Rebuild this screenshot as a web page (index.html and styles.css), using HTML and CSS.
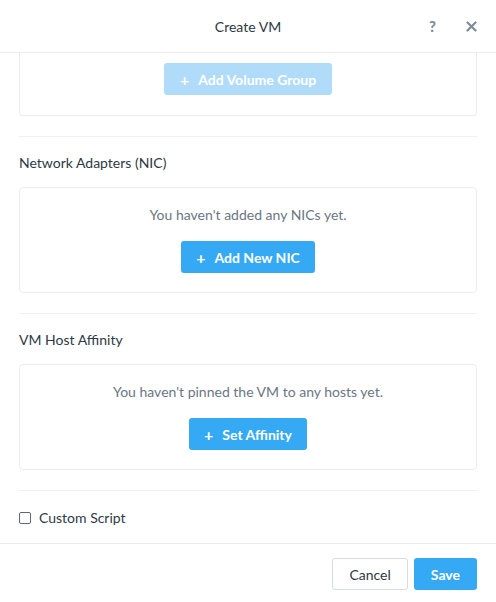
FILE: index.html
```html
<!DOCTYPE html>
<html>
<head>
<meta charset="utf-8">
<link rel="stylesheet" href="styles.css">
</head>
<body>
<div class="modal">
  <header class="head">
    <div class="title">Create VM</div>
    <div class="head-actions">
      <span class="help">?</span>
      <span class="close">
        <svg width="11" height="11" viewBox="0 0 11 11"><path d="M1.5 1.5L9.5 9.5M9.5 1.5L1.5 9.5" stroke="#7f8b99" stroke-width="2.2" stroke-linecap="round"/></svg>
      </span>
    </div>
  </header>
  <main class="body">
    <div class="card card-cut">
      <button class="btn btn-primary btn-disabled"><span class="plus">+</span>Add Volume Group</button>
    </div>
    <hr class="divider">
    <div class="section-title">Network Adapters (NIC)</div>
    <div class="card">
      <div class="empty">You haven't added any NICs yet.</div>
      <button class="btn btn-primary"><span class="plus">+</span>Add New NIC</button>
    </div>
    <hr class="divider">
    <div class="section-title">VM Host Affinity</div>
    <div class="card">
      <div class="empty">You haven't pinned the VM to any hosts yet.</div>
      <button class="btn btn-primary"><span class="plus">+</span>Set Affinity</button>
    </div>
    <hr class="divider">
    <label class="check-row"><span class="checkbox"></span>Custom Script</label>
  </main>
  <footer class="foot">
    <button class="btn btn-default">Cancel</button>
    <button class="btn btn-primary">Save</button>
  </footer>
</div>
</body>
</html>
```
FILE: styles.css
```css
* { box-sizing: border-box; }
html, body { margin: 0; padding: 0; background: #fff; }
body {
  font-family: "Lato", "Liberation Sans", sans-serif;
  font-size: 13px;
  color: #2e3945;
  width: 496px;
  height: 602px;
  overflow: hidden;
}
.modal { display: flex; flex-direction: column; height: 602px; }
.head {
  height: 53px;
  border-bottom: 1px solid #e9edf1;
  display: flex;
  align-items: center;
  justify-content: center;
  position: relative;
  flex-shrink: 0;
}
.title { font-size: 14px; color: #2e3945; }
.head-actions {
  position: absolute;
  right: 19px;
  top: 0;
  height: 52px;
  display: flex;
  align-items: center;
  gap: 30px;
}
.help { font-weight: 900; color: #7f8b99; font-size: 15px; }
.close { display: flex; align-items: center; }
.body { padding: 0 19px; flex: 1; }
.card {
  border: 1px solid #e9edf1;
  border-radius: 4px;
  padding: 19px 0;
  display: flex;
  flex-direction: column;
  align-items: center;
}
.card-cut {
  border-top: 0;
  border-radius: 0 0 4px 4px;
  padding-top: 10px;
  padding-bottom: 20px;
}
.empty { line-height: 16px; color: #6b7684; font-size: 14px; margin-bottom: 18px; }
.divider { border: 0; border-top: 1px solid #eef1f4; margin: 20px 0 0; height: 0; }
.section-title { line-height: 16px; margin: 18px 0 16px; font-size: 14px; color: #2e3945; }
.btn {
  height: 32px;
  border-radius: 3px;
  font-family: inherit;
  font-size: 14px;
  padding: 0 14px;
  display: inline-flex;
  align-items: center;
  border: 1px solid transparent;
}
.btn-primary { background: #36a9f5; color: #fff; font-weight: 700; }
.btn-disabled { background: #b1dcf9; padding: 0 15px; }
.plus { font-weight: 700; margin-right: 9px; font-size: 16px; }
.btn-default { background: #fff; border-color: #d6dce2; color: #2e3945; font-weight: 400; }
.check-row {
  display: flex;
  align-items: center;
  line-height: 16px;
  margin-top: 19px;
  font-size: 14px;
}
.checkbox {
  width: 12px;
  height: 12px;
  border: 1px solid #5d6876;
  border-radius: 2px;
  margin-right: 8px;
}
.foot {
  border-top: 1px solid #e9edf1;
  padding: 14px 19px 0 0;
  height: 59px;
  display: flex;
  justify-content: flex-end;
  gap: 6px;
  flex-shrink: 0;
}
.foot .btn { height: 32px; padding: 0 16px; }
```
